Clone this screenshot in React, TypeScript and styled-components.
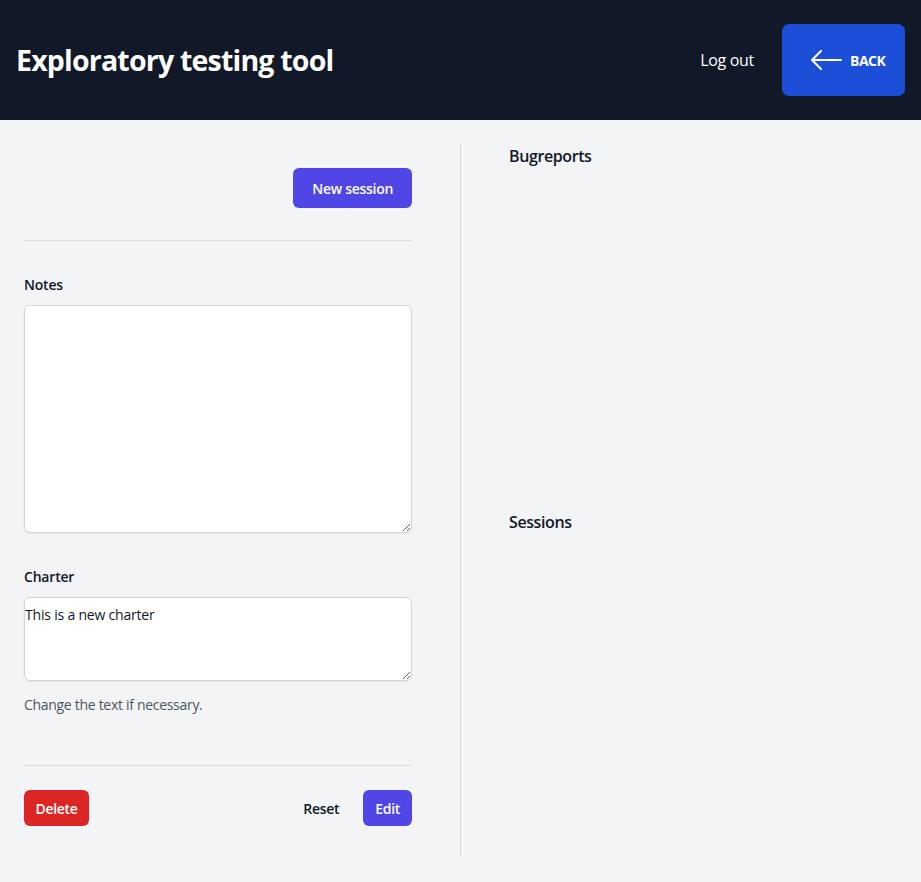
import React from "react";
import styled, { createGlobalStyle } from "styled-components";

const Global = createGlobalStyle`
  html, body { margin: 0; padding: 0; }
  body {
    background: #f3f4f6;
    font-family: "Open Sans", "Noto Sans", sans-serif;
    color: #111827;
  }
  * { box-sizing: border-box; }
`;

const Header = styled.header`
  height: 120px;
  background: #111827;
  display: flex;
  align-items: center;
  justify-content: space-between;
  padding: 0 16px;
`;

const Title = styled.h1`
  margin: 0;
  font-size: 28.5px;
  font-weight: 700;
  color: #fff;
  letter-spacing: -0.8px;
`;

const HeaderActions = styled.div`
  display: flex;
  align-items: center;
  gap: 28px;
`;

const LogOut = styled.button`
  background: none;
  border: none;
  color: #fff;
  font-family: inherit;
  font-size: 16px;
  padding: 0;
  letter-spacing: -0.3px;
  cursor: pointer;
`;

const BackButton = styled.button`
  width: 123px;
  height: 72px;
  background: #1d4ed8;
  border: none;
  border-radius: 7px;
  color: #fff;
  display: flex;
  align-items: center;
  gap: 8px;
  padding: 0 0 0 28px;
  font-family: inherit;
  font-size: 14px;
  font-weight: 700;
  letter-spacing: -0.5px;
  cursor: pointer;
`;

const Main = styled.main`
  display: flex;
  padding: 24px 24px 25px;
  min-height: 762px;
`;

const LeftCol = styled.section`
  width: 388px;
  padding-top: 24px;
  display: flex;
  flex-direction: column;
  flex-shrink: 0;
`;

const Divider = styled.div`
  width: 1px;
  background: #d1d5db;
  margin-left: 48px;
  align-self: stretch;
`;

const RightCol = styled.section`
  flex: 1;
  padding-left: 48px;
  display: flex;
  flex-direction: column;
`;

const TopRow = styled.div`
  display: flex;
  justify-content: flex-end;
`;

const Button = styled.button<{ $variant: "primary" | "danger" | "plain"; $h?: number; $px?: number }>`
  height: ${(p) => p.$h ?? 36}px;
  padding: 0 ${(p) => (p.$variant === "plain" ? 0 : p.$px ?? 12)}px;
  border: none;
  border-radius: 6px;
  font-family: inherit;
  font-size: 14px;
  font-weight: 600;
  letter-spacing: -0.3px;
  cursor: pointer;
  color: ${(p) => (p.$variant === "plain" ? "#111827" : "#fff")};
  background: ${(p) =>
    p.$variant === "primary" ? "#4f46e5" : p.$variant === "danger" ? "#dc2626" : "transparent"};
`;

const Rule = styled.hr<{ $mt: number }>`
  border: none;
  border-top: 1px solid #dcdde1;
  margin: ${(p) => p.$mt}px 0 0;
  width: 100%;
`;

const Field = styled.div<{ $mt: number }>`
  margin-top: ${(p) => p.$mt}px;
  display: flex;
  flex-direction: column;
`;

const Label = styled.label`
  font-size: 14px;
  line-height: 20px;
  font-weight: 600;
  color: #111827;
  margin-bottom: 10px;
  letter-spacing: -0.2px;
`;

const TextArea = styled.textarea<{ $h: number }>`
  width: 100%;
  height: ${(p) => p.$h}px;
  border: 1px solid #d1d5db;
  border-radius: 6px;
  background: #fff;
  padding: 7px 0 0;
  font-family: inherit;
  font-size: 14px;
  color: #111827;
  letter-spacing: -0.2px;
  box-shadow: 0 1px 2px rgba(0, 0, 0, 0.05);
  outline: none;
`;

const Help = styled.p`
  margin: 14px 0 0;
  font-size: 14px;
  line-height: 20px;
  color: #4b5563;
  letter-spacing: -0.3px;
`;

const ActionRow = styled.div`
  display: flex;
  align-items: center;
  margin-top: 24px;
`;

const Spacer = styled.div`
  flex: 1;
`;

const RightActions = styled.div`
  display: flex;
  align-items: center;
  gap: 24px;
`;

const PanelTitle = styled.h2<{ $h: number }>`
  margin: 0;
  font-size: 16px;
  line-height: 24px;
  font-weight: 600;
  color: #111827;
  letter-spacing: -0.4px;
  height: ${(p) => p.$h}px;
`;

const ArrowIcon = () => (
  <svg width="32" height="20" viewBox="0 0 32 20" fill="none">
    <path d="M31 10H2M11 1L2 10l9 9" stroke="#fff" strokeWidth="2" strokeLinecap="round" strokeLinejoin="round" />
  </svg>
);

export default function App() {
  return (
    <>
      <Global />
      <Header>
        <Title>Exploratory testing tool</Title>
        <HeaderActions>
          <LogOut>Log out</LogOut>
          <BackButton>
            <ArrowIcon />
            BACK
          </BackButton>
        </HeaderActions>
      </Header>
      <Main>
        <LeftCol>
          <TopRow>
            <Button $variant="primary" $h={40} $px={19}>
              New session
            </Button>
          </TopRow>
          <Rule $mt={32} />
          <Field $mt={34}>
            <Label>Notes</Label>
            <TextArea $h={228} />
          </Field>
          <Field $mt={34}>
            <Label>Charter</Label>
            <TextArea $h={84} defaultValue="This is a new charter" />
          </Field>
          <Help>Change the text if necessary.</Help>
          <Rule $mt={50} />
          <ActionRow>
            <Button $variant="danger" $px={11.5}>Delete</Button>
            <Spacer />
            <RightActions>
              <Button $variant="plain">Reset</Button>
              <Button $variant="primary" $px={12}>Edit</Button>
            </RightActions>
          </ActionRow>
        </LeftCol>
        <Divider />
        <RightCol>
          <PanelTitle $h={366}>Bugreports</PanelTitle>
          <PanelTitle $h={24}>Sessions</PanelTitle>
        </RightCol>
      </Main>
    </>
  );
}
